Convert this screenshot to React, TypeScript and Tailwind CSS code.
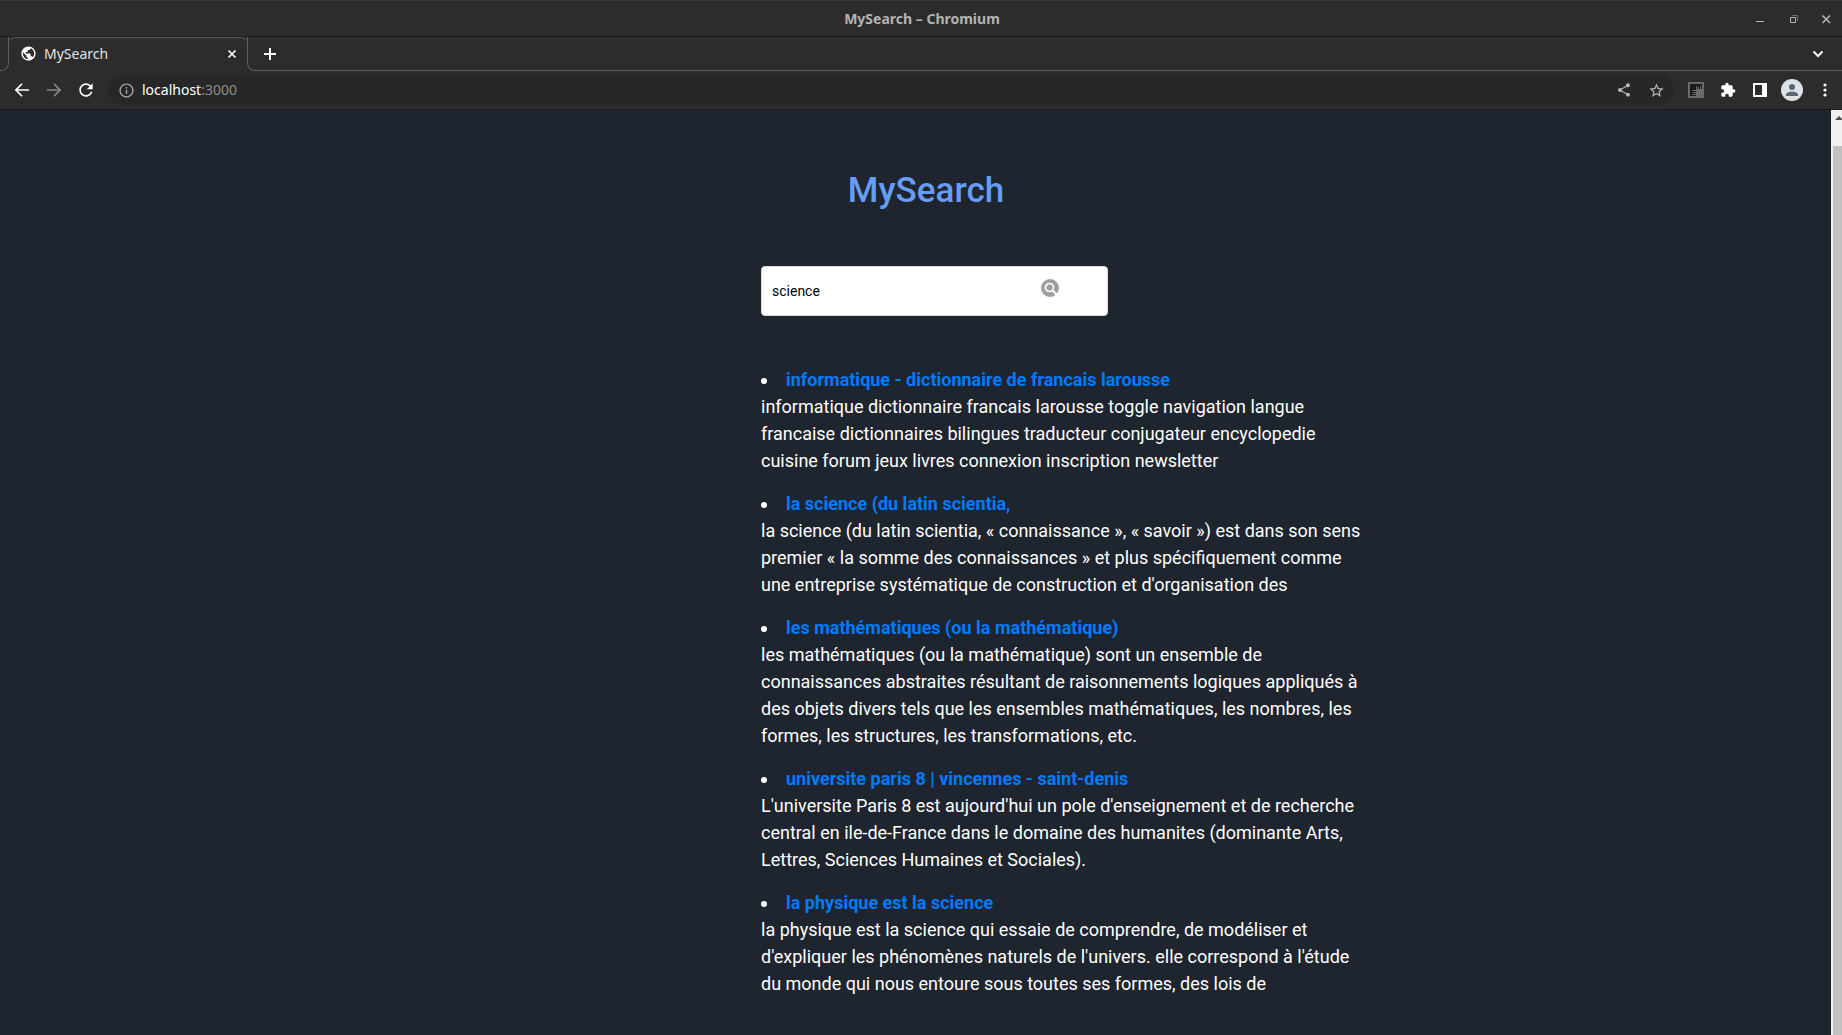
import { useState } from "react";
import type { ReactNode } from "react";

type Result = { title: string; text: string };

const results: Result[] = [
  {
    title: "informatique - dictionnaire de francais larousse",
    text: "informatique dictionnaire francais larousse toggle navigation langue francaise dictionnaires bilingues traducteur conjugateur encyclopedie cuisine forum jeux livres connexion inscription newsletter",
  },
  {
    title: "la science (du latin scientia,",
    text: "la science (du latin scientia, « connaissance », « savoir ») est dans son sens premier « la somme des connaissances » et plus spécifiquement comme une entreprise systématique de construction et d'organisation des",
  },
  {
    title: "les mathématiques (ou la mathématique)",
    text: "les mathématiques (ou la mathématique) sont un ensemble de connaissances abstraites résultant de raisonnements logiques appliqués à des objets divers tels que les ensembles mathématiques, les nombres, les formes, les structures, les transformations, etc.",
  },
  {
    title: "universite paris 8 | vincennes - saint-denis",
    text: "L'universite Paris 8 est aujourd'hui un pole d'enseignement et de recherche central en ile-de-France dans le domaine des humanites (dominante Arts, Lettres, Sciences Humaines et Sociales).",
  },
  {
    title: "la physique est la science",
    text: "la physique est la science qui essaie de comprendre, de modéliser et d'expliquer les phénomènes naturels de l'univers. elle correspond à l'étude du monde qui nous entoure sous toutes ses formes, des lois de",
  },
];

function IconButton({
  label,
  className,
  children,
}: {
  label: string;
  className?: string;
  children: ReactNode;
}) {
  return (
    <button
      type="button"
      aria-label={label}
      className={"flex shrink-0 items-center justify-center " + (className ?? "size-8")}
    >
      {children}
    </button>
  );
}

function MaterialIcon({ d, className }: { d: string; className: string }) {
  return (
    <svg viewBox="0 0 24 24" fill="currentColor" className={className} aria-hidden="true">
      <path d={d} />
    </svg>
  );
}

function TitleBar() {
  return (
    <div className="grid h-9 shrink-0 grid-cols-[1fr_auto_1fr] items-center border-t border-[#3c3c3c] bg-[#2c2c2c]">
      <span />
      <span className="pl-0.5 text-sm font-bold text-[#b4b4b4]">MySearch – Chromium</span>
      <div className="flex justify-end text-[#b8b8b8]">
        <IconButton label="Minimize" className="h-9 w-[34px]">
          <svg viewBox="0 0 10 10" className="size-[10px]" stroke="currentColor" aria-hidden="true">
            <path d="M1 7.500h8" />
          </svg>
        </IconButton>
        <IconButton label="Restore" className="h-9 w-[34px]">
          <svg viewBox="0 0 10 10" className="size-[10px]" fill="none" stroke="currentColor" aria-hidden="true">
            <path d="M1.500 3.500h5v5h-5z" />
            <path d="M3 1.500h5.500v5.500" opacity=".5" />
          </svg>
        </IconButton>
        <IconButton label="Close" className="mr-px h-9 w-[30px]">
          <svg viewBox="0 0 10 10" className="size-[10px]" stroke="currentColor" strokeWidth="1.500" aria-hidden="true">
            <path d="M1.500 1.500l7.500 7.500M9 1.500l-7.500 7.500" />
          </svg>
        </IconButton>
      </div>
    </div>
  );
}

function TabStrip() {
  return (
    <div className="flex h-[35px] shrink-0 border-t border-[#1b1b1b] bg-[#2c2c2c]">
      <div className="w-[9px] rounded-br-lg border-r border-b border-[#5e5e5e]" />
      <div className="-ml-px flex w-[240px] items-center rounded-t-lg border-t border-[#5e5e5e] pr-2 pb-0.5 pl-3 text-[#e4e4e4]">
        <MaterialIcon
          className="size-[17px] text-white"
          d="M12 2C6.480 2 2 6.480 2 12s4.480 10 10 10 10-4.480 10-10S17.520 2 12 2zm-1 17.930c-3.950-.49-7-3.850-7-7.930 0-.62.08-1.210.21-1.790L9 15v1c0 1.100.9 2 2 2v1.930zm6.900-2.540c-.26-.81-1-1.390-1.900-1.390h-1v-3c0-.55-.45-1-1-1H8v-2h2c.55 0 1-.45 1-1V7h2c1.100 0 2-.9 2-2v-.41c2.930 1.190 5 4.060 5 7.410 0 2.080-.8 3.970-2.100 5.390z"
        />
        <span className="ml-[7px] flex-1 text-sm">MySearch</span>
        <IconButton label="Close tab" className="size-4">
          <svg viewBox="0 0 10 10" className="size-[10px]" stroke="#fff" strokeWidth="1.600" aria-hidden="true">
            <path d="M1.500 1.500l7 7M8.500 1.500l-7 7" />
          </svg>
        </IconButton>
      </div>
      <div className="-ml-px flex flex-1 items-center justify-between rounded-bl-lg border-b border-l border-[#5e5e5e] pr-2 pl-1 text-white">
        <IconButton label="New tab" className="ml-2 size-5">
          <svg viewBox="0 0 12 12" className="size-3" stroke="currentColor" strokeWidth="2" aria-hidden="true">
            <path d="M6 0v12M0 6h12" />
          </svg>
        </IconButton>
        <IconButton label="Search tabs">
          <svg viewBox="0 0 12 12" className="size-3" fill="none" stroke="currentColor" strokeWidth="2" aria-hidden="true">
            <path d="M1.500 3.500L6 8l4.500-4.500" />
          </svg>
        </IconButton>
      </div>
    </div>
  );
}

function Toolbar() {
  return (
    <div className="flex h-[39px] shrink-0 items-center border-b border-[#1b1b1b] bg-[#2c2c2c] pl-1.5 text-white">
      <IconButton label="Back">
        <MaterialIcon className="size-5" d="M20.500 11H7l5.800-5.800L11.400 3.800 3.200 12l8.200 8.200 1.400-1.400L7 13h13.500z" />
      </IconButton>
      <IconButton label="Forward" className="size-8 text-[#868686]">
        <MaterialIcon className="size-5" d="M3.500 11H17l-5.800-5.800 1.400-1.400 8.200 8.200-8.200 8.200-1.400-1.400L17 13H3.500z" />
      </IconButton>
      <IconButton label="Reload">
        <MaterialIcon
          className="size-5"
          d="M17.650 6.350C16.200 4.900 14.210 4 12 4c-4.420 0-7.990 3.580-7.990 8s3.570 8 7.990 8c3.730 0 6.840-2.550 7.730-6h-2.080c-.82 2.330-3.040 4-5.650 4-3.310 0-6-2.690-6-6s2.690-6 6-6c1.660 0 3.140.69 4.220 1.780L13 11h7V4l-2.350 2.350z"
        />
      </IconButton>
      <div className="ml-1.5 flex h-[30px] flex-1 items-center rounded-full bg-[#272727] pr-0.5 pl-2">
        <IconButton label="Site information" className="size-5 text-[#a4a4a4]">
          <MaterialIcon
            className="size-[17px]"
            d="M11 7h2v2h-2zm0 4h2v6h-2zm1-9C6.480 2 2 6.480 2 12s4.480 10 10 10 10-4.480 10-10S17.520 2 12 2zm0 18c-4.410 0-8-3.590-8-8s3.590-8 8-8 8 3.590 8 8-3.590 8-8 8z"
          />
        </IconButton>
        <p className="ml-1.5 flex-1 text-sm text-[#8c8c8c]">
          <span className="text-white">localhost</span>:3000
        </p>
        <IconButton label="Share" className="size-8 text-[#b8b8b8]">
          <MaterialIcon
            className="size-4"
            d="M18 16.080c-.76 0-1.440.3-1.960.77L8.910 12.700c.05-.23.09-.46.09-.7s-.04-.47-.09-.7l7.050-4.110c.54.5 1.250.81 2.040.81 1.660 0 3-1.340 3-3s-1.340-3-3-3-3 1.340-3 3c0 .24.04.47.09.7L8.040 9.810C7.500 9.310 6.790 9 6 9c-1.660 0-3 1.340-3 3s1.340 3 3 3c.79 0 1.500-.31 2.040-.81l7.120 4.160c-.05.21-.08.43-.08.65 0 1.610 1.310 2.920 2.920 2.920s2.920-1.310 2.920-2.920-1.310-2.920-2.920-2.920z"
          />
        </IconButton>
        <IconButton label="Bookmark this page" className="size-8 text-[#b8b8b8]">
          <MaterialIcon
            className="size-[17px]"
            d="M22 9.240l-7.190-.62L12 2 9.190 8.630 2 9.240l5.460 4.730L5.820 21 12 17.270 18.180 21l-1.630-7.030L22 9.240zM12 15.400l-3.760 2.270 1-4.280-3.320-2.880 4.380-.38L12 6.100l1.710 4.040 4.380.38-3.320 2.880 1 4.280L12 15.400z"
          />
        </IconButton>
      </div>
      <IconButton label="Extension" className="ml-1.5 size-8">
        <svg viewBox="0 0 16 16" className="size-4" aria-hidden="true">
          <path d="M0 0h16v16H0z" fill="#6b6b6b" />
          <path d="M2 2h12v5H8v7H2z" fill="#1b1b1b" />
          <path d="M4 8.500h4M5 10.500h3M4 12.500h4M8.500 4v3M10.500 5v2M12.500 4v3" stroke="#6b6b6b" />
        </svg>
      </IconButton>
      <IconButton label="Extensions">
        <MaterialIcon
          className="size-4"
          d="M20.500 11H19V7c0-1.100-.9-2-2-2h-4V3.500C13 2.120 11.880 1 10.500 1S8 2.120 8 3.500V5H4c-1.100 0-1.990.9-1.990 2v3.800H3.500c1.490 0 2.700 1.210 2.700 2.700s-1.210 2.700-2.700 2.700H2V20c0 1.100.9 2 2 2h3.800v-1.500c0-1.490 1.210-2.700 2.700-2.700 1.490 0 2.700 1.210 2.700 2.700V22H17c1.100 0 2-.9 2-2v-4h1.500c1.380 0 2.500-1.120 2.500-2.500S21.880 11 20.500 11z"
        />
      </IconButton>
      <IconButton label="Side panel">
        <svg viewBox="0 0 14 14" className="size-[14px]" fill="currentColor" aria-hidden="true">
          <path fillRule="evenodd" d="M0 0h14v14H0zM2 2v10h7V2z" />
        </svg>
      </IconButton>
      <IconButton label="Profile">
        <svg viewBox="0 0 22 22" className="size-[22px]" aria-hidden="true">
          <circle cx="11" cy="11" r="11" fill="#dee1e6" />
          <circle cx="11" cy="8" r="3" fill="#5b6578" />
          <path d="M5 17v-1.500c0-2 4-3 6-3s6 1 6 3V17z" fill="#5b6578" />
        </svg>
      </IconButton>
      <IconButton label="Menu" className="h-8 w-[34px]">
        <svg viewBox="0 0 4 14" className="h-[14px] w-1" fill="currentColor" aria-hidden="true">
          <circle cx="2" cy="2" r="1.600" />
          <circle cx="2" cy="7" r="1.600" />
          <circle cx="2" cy="12" r="1.600" />
        </svg>
      </IconButton>
    </div>
  );
}

function SearchPage() {
  const [query, setQuery] = useState("science");
  return (
    <main className="flex-1 overflow-hidden bg-[#1e252e] pl-[calc(50%-160px)] font-['Roboto',sans-serif] text-white">
      <h1 className="mt-[60px] w-[330px] text-center text-[35px] leading-[42px] font-medium text-[#669df6]">
        MySearch
      </h1>
      <form
        role="search"
        onSubmit={(event) => event.preventDefault()}
        className="mt-[54px] flex h-[50px] w-[347px] items-center rounded border border-[#dcdcdc] bg-white"
      >
        <input
          type="text"
          aria-label="Search"
          value={query}
          onChange={(event) => setQuery(event.target.value)}
          className="h-full w-[278px] bg-transparent pl-2.5 text-sm text-black outline-none"
        />
        <button type="submit" aria-label="Search" className="mb-1.5 flex">
          <svg viewBox="0 0 20 20" className="size-5" fill="none" aria-hidden="true">
            <circle cx="10" cy="10" r="9" fill="#9f9f9f" />
            <circle cx="9.500" cy="9.500" r="4" stroke="#fff" strokeWidth="1.700" />
            <path d="M12.500 12.500l5 5" stroke="#fff" strokeWidth="2" />
          </svg>
        </button>
      </form>
      <ul className="mt-[50px] flex max-w-[604px] list-inside list-disc flex-col gap-4 text-lg leading-[27px]">
        {results.map((result) => (
          <li key={result.title}>
            <a href="#result" className="font-bold text-[#007bff]">
              {result.title}
            </a>
            <p>{result.text}</p>
          </li>
        ))}
      </ul>
    </main>
  );
}

function ScrollBar() {
  return (
    <div className="flex w-[11px] shrink-0 flex-col overflow-hidden bg-[#f1f1f1] pl-0.5" aria-hidden="true">
      <svg viewBox="0 0 9 36" className="h-9 w-[9px] shrink-0">
        <path d="M2 10l4-4 4 4z" fill="#505050" />
      </svg>
      <div className="flex-1 bg-[#c1c1c1]" />
    </div>
  );
}

export default function App() {
  return (
    <div className="flex h-screen flex-col overflow-hidden font-['Noto_Sans',sans-serif]">
      <TitleBar />
      <TabStrip />
      <Toolbar />
      <div className="flex min-h-0 flex-1">
        <SearchPage />
        <ScrollBar />
      </div>
    </div>
  );
}
